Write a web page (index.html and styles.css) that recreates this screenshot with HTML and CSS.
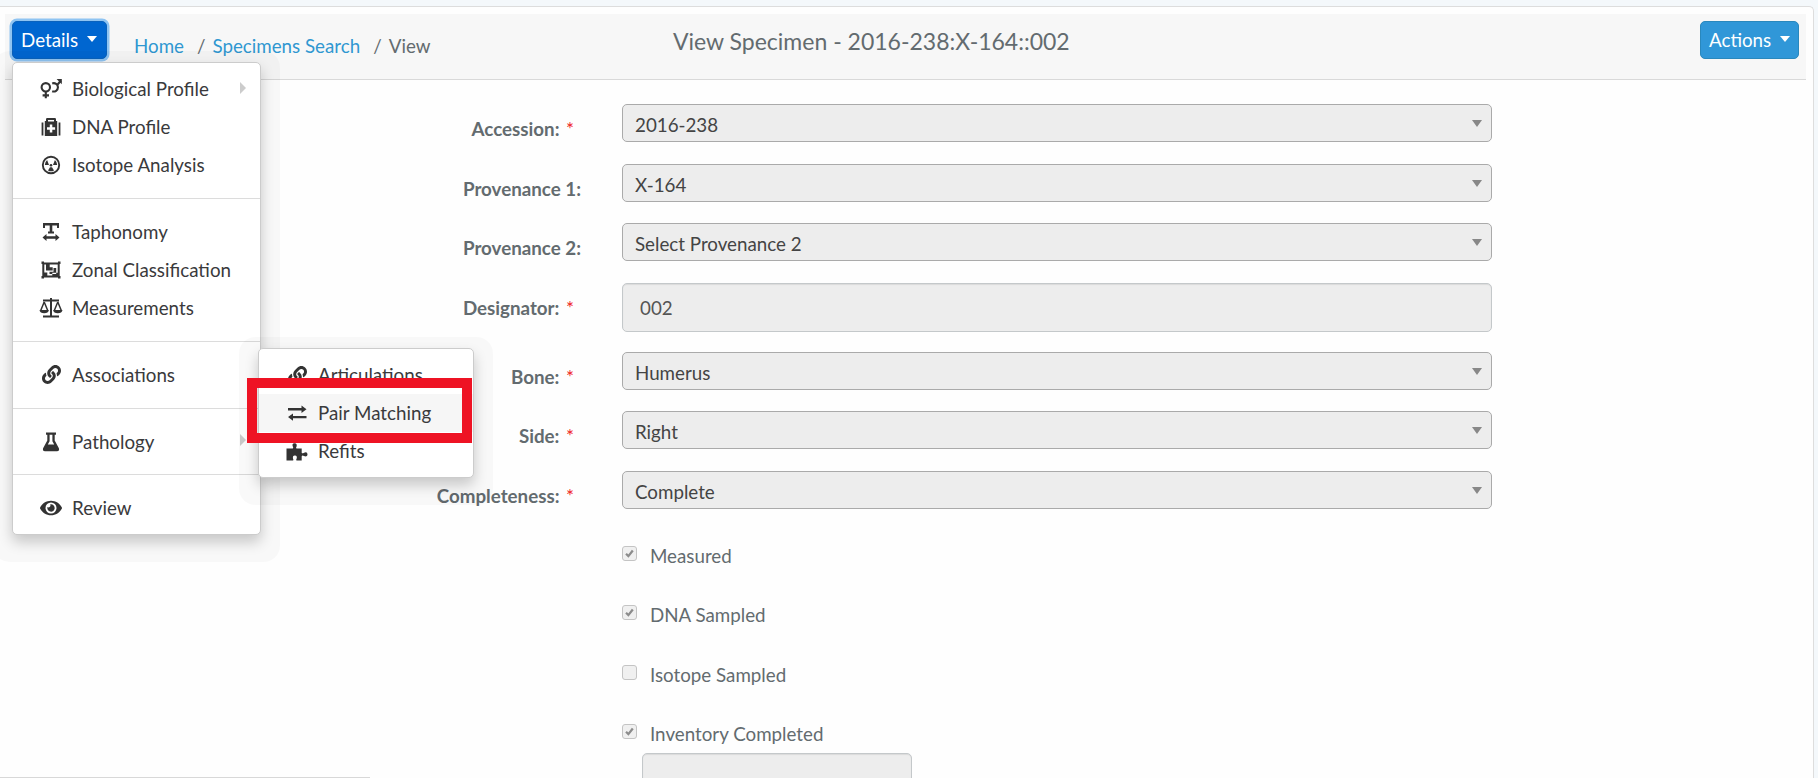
FILE: index.html
```html
<!DOCTYPE html>
<html lang="en">
<head>
<meta charset="utf-8">
<title>View Specimen</title>
<link rel="stylesheet" href="styles.css">
</head>
<body>
<main class="panel">
  <header class="header">
    <div class="dropdown">
      <button class="btn btn-details">Details<span class="caret"></span></button>
      <nav class="menu main-menu">
        <a class="item"><svg class="icon" viewBox="0 0 24 24"><g fill="none" stroke="currentColor" stroke-width="2.1"><circle cx="6.8" cy="10.3" r="4.2"/><path d="M6.8 14.5v6.8M3.6 18.4h6.4M13.2 6.4a4.2 4.2 0 1 1 0 7.8M18.8 7.2l3-3.4"/></g><path d="M17.6 2h5.2v5.2z"/></svg>Biological Profile<span class="more"></span></a>
        <a class="item"><svg class="icon" viewBox="0 0 24 24"><path fill-rule="evenodd" d="M7 6V4.2Q7 3 8.200 3h7.600Q17 3 17 4.200V6h1.200v15H5.800V6zM9 5v1.500h6V5zM10.800 9.500v2.700H8v2.600h2.800v2.700h2.500v-2.700h2.800v-2.600h-2.800V9.500z"/><path d="M2.600 7.500h1.800v13H2.600zM19.600 7.500h1.800v13h-1.800z"/></svg>DNA Profile</a>
        <a class="item"><svg class="icon" viewBox="0 0 24 24"><circle cx="12" cy="12" r="8.200" fill="none" stroke="currentColor" stroke-width="1.900"/><circle cx="12" cy="12.200" r="1.300"/><path d="M10 12H5.800q.2-3 2.300-4.900zM14 12h4.200q-.2-3-2.300-4.900zM11 14.200h2l2 3.300q-3 1.700-6 0z"/></svg>Isotope Analysis</a>
        <hr class="divider">
        <a class="item"><svg class="icon" viewBox="0 0 24 24"><path d="M4 3h16v5h-2V5.500h-4.700v6H15v2H9v-2h1.700v-6H6V8H4zM3.500 17.500l4-3.500v2.300h9V14l4 3.500-4 3.500v-2.300h-9V21z"/></svg>Taphonomy</a>
        <a class="item"><svg class="icon" viewBox="0 0 24 24"><path fill-rule="evenodd" d="M2.500 3.500H5v1h14v-1h2.500V6h-.8v12h.8v2.500H19v-1H5v1H2.500V18h.8V6h-.8zM5.300 6.500v8h3v3h5v-2.800h5.400v-8.200h-5v2.800h-3V6.500zM7 6.500h6.700v6H7zM14.500 10h2.700v6h-6.700v-2.200h4z"/></svg>Zonal Classification</a>
        <a class="item"><svg class="icon" viewBox="0 0 24 24"><g fill="none" stroke="currentColor"><path stroke-width="2" d="M4 4.500h16M12 2v18M4 20.500h16"/><path stroke-width="1.500" d="M5.200 6L1.700 14.500M5.200 6l3.500 8.500M18.800 6l-3.500 8.500M18.800 6l3.500 8.500"/></g><path d="M.5 14h9.400q-.6 3.200-4.700 3.200T.5 14zM14.100 14h9.400q-.6 3.200-4.700 3.200T14.100 14z"/></svg>Measurements</a>
        <hr class="divider">
        <a class="item"><svg class="icon link" viewBox="0 0 512 512"><path id="chain" d="M326.612 185.391c59.747 59.809 58.927 155.698.36 214.59-.11.12-.24.25-.36.37l-67.2 67.2c-59.27 59.27-155.699 59.262-214.96 0-59.27-59.26-59.27-155.7 0-214.96l37.106-37.106c9.84-9.84 26.786-3.3 27.294 10.606.648 17.722 3.826 35.527 9.69 52.721 1.986 5.822.567 12.262-3.783 16.612l-13.087 13.087c-28.026 28.026-28.905 73.66-1.155 101.96 28.024 28.579 74.086 28.749 102.325.51l67.2-67.19c28.191-28.191 28.073-73.757 0-101.83-3.701-3.694-7.429-6.564-10.341-8.569a16.037 16.037 0 0 1-6.947-12.606c-.396-10.567 3.348-21.456 11.698-29.806l21.054-21.055c5.521-5.521 14.182-6.199 20.584-1.731a152.482 152.482 0 0 1 20.522 17.197zM467.547 44.449c-59.261-59.262-155.690-59.270-214.960 0l-67.200 67.200c-.120.120-.250.250-.360.370-58.566 58.892-59.387 154.781.360 214.590a152.454 152.454 0 0 0 20.521 17.196c6.402 4.468 15.064 3.789 20.584-1.731l21.054-21.055c8.350-8.350 12.094-19.239 11.698-29.806a16.037 16.037 0 0 0-6.947-12.606c-2.912-2.005-6.640-4.875-10.341-8.569-28.073-28.073-28.191-73.639 0-101.830l67.200-67.190c28.239-28.239 74.300-28.069 102.325.510 27.750 28.300 26.872 73.934-1.155 101.960l-13.087 13.087c-4.350 4.350-5.769 10.790-3.783 16.612 5.864 17.194 9.042 34.999 9.690 52.721.509 13.906 17.454 20.446 27.294 10.606l37.106-37.106c59.271-59.259 59.271-155.699.001-214.959z"/></svg>Associations</a>
        <hr class="divider">
        <a class="item"><svg class="icon" viewBox="0 0 24 24"><path fill-rule="evenodd" d="M7 2.500h10v2.300h-1.300v5.700l4.200 7.700q.8 2.800-1.900 3H6q-2.700-.2-1.900-3l4.200-7.700V4.800H7zM10.600 4.800v6.400L8.800 14.500h6.400l-1.800-3.300V4.800z"/></svg>Pathology<span class="more"></span></a>
        <hr class="divider">
        <a class="item"><svg class="icon eye" viewBox="0 0 576 512"><path d="M572.520 241.400C518.290 135.590 410.930 64 288 64S57.680 135.640 3.480 241.410a32.350 32.350 0 0 0 0 29.190C57.710 376.410 165.070 448 288 448s230.320-71.640 284.520-177.410a32.350 32.350 0 0 0 0-29.190zM288 400a144 144 0 1 1 144-144 143.930 143.930 0 0 1-144 144zm0-240a95.310 95.310 0 0 0-25.310 3.790 47.850 47.850 0 0 1-66.900 66.900A95.780 95.780 0 1 0 288 160z"/></svg>Review</a>
      </nav>
      <nav class="menu sub-menu">
        <a class="item"><svg class="icon link" viewBox="0 0 512 512"><use href="#chain"/></svg>Articulations</a>
        <a class="item active"><svg class="icon" viewBox="0 0 24 24"><path d="M3 7h13.500V4.500l5 3.700-5 3.700V9.400H3zM21.500 17.300H8v2.500l-5-3.700 5-3.700v2.500h13.500z"/></svg>Pair Matching</a>
        <a class="item"><svg class="icon" viewBox="0 0 24 24"><path d="M1.500 9.500h6.200q1-.7.2-1.700Q6.500 4.500 9.500 4.300t2 3.500q-1 1 0 1.700h5.200v4.200q.7 1.200 1.900.2 3.700-1.700 3.900 1.400t-3.600 1.700q-1.500-1-2.200.3V21.500h-5.200q-.7-.8.100-1.800 1-3-1.600-3.200t-2 3.200q.8 1 .1 1.800H1.500z"/></svg>Refits</a>
      </nav>
      <div class="highlight"></div>
    </div>
    <ol class="crumbs"><li><a>Home</a></li><li><a>Specimens Search</a></li><li>View</li></ol>
    <h1 class="title">View Specimen - 2016-238:X-164::002</h1>
    <button class="btn btn-actions">Actions<span class="caret"></span></button>
  </header>
  <form class="form">
    <div class="row"><label class="label">Accession: <b class="req">*</b></label><div class="select">2016-238</div></div>
    <div class="row"><label class="label">Provenance 1:</label><div class="select">X-164</div></div>
    <div class="row"><label class="label">Provenance 2:</label><div class="select">Select Provenance 2</div></div>
    <div class="row tall"><label class="label">Designator: <b class="req">*</b></label><div class="input">002</div></div>
    <div class="row"><label class="label">Bone: <b class="req">*</b></label><div class="select">Humerus</div></div>
    <div class="row"><label class="label">Side: <b class="req">*</b></label><div class="select">Right</div></div>
    <div class="row"><label class="label">Completeness: <b class="req">*</b></label><div class="select">Complete</div></div>
    <div class="check"><span class="box"><svg viewBox="0 0 15 15"><path d="M3.500 7.800l2.700 2.700L11.300 4"/></svg></span>Measured</div>
    <div class="check"><span class="box"><svg viewBox="0 0 15 15"><path d="M3.500 7.800l2.700 2.700L11.300 4"/></svg></span>DNA Sampled</div>
    <div class="check"><span class="box"></span>Isotope Sampled</div>
    <div class="check last"><span class="box"><svg viewBox="0 0 15 15"><path d="M3.500 7.800l2.700 2.700L11.300 4"/></svg></span>Inventory Completed</div>
    <div class="input date">09/14/2018</div>
  </form>
</main>
<div class="status-edge"></div>
</body>
</html>
```
FILE: styles.css
```css
* { box-sizing: border-box; }
body {
  margin: 0;
  height: 778px;
  overflow: hidden;
  padding-top: 6px;
  background: #f4f8fb;
  font: 18.75px/28px Lato, sans-serif;
  color: #636b6f;
}
.panel {
  width: 1814px;
  height: 790px;
  padding: 7px 7px 0 5px;
  background: #fefefe;
  border: solid #ddd;
  border-width: 1px 1px 0 0;
  border-radius: 0 5px 0 0;
}
.header {
  display: flex;
  align-items: flex-start;
  height: 66px;
  padding: 7px 7px 0 6px;
  background: #f7f7f7;
  border-bottom: 1px solid #d9d9d9;
}
.dropdown { position: relative; width: 97px; }
.btn {
  display: flex;
  align-items: center;
  height: 38px;
  padding: 0 8px;
  border: 1px solid #2a88bd;
  border-radius: 5px;
  background: #3097d8;
  color: #fff;
  font: inherit;
  white-space: nowrap;
}
.btn-details {
  width: 95px;
  margin-left: 1px;
  padding-left: 8px;
  background: #0066d0;
  border-color: #0a62bd;
  box-shadow: 0 0 0 2.5px #8fc4f2;
}
.btn-actions { width: 99px; margin-left: auto; }
.caret {
  margin: -3px 0 0 9px;
  border: solid transparent;
  border-width: 6px 5.5px 0;
  border-top-color: #fff;
}
.crumbs {
  display: flex;
  width: 565px;
  margin: 0;
  padding: 11px 0 0 26px;
  list-style: none;
}
.crumbs li + li::before { content: "/"; padding: 0 7px 0 13px; }
.crumbs a { color: #3097d1; }
.title {
  margin: 0;
  padding-top: 5px;
  font-size: 23px;
  font-weight: 400;
  line-height: 30px;
}
.menu {
  position: absolute;
  padding: 7px 0;
  background: #fff;
  border: 1px solid #ccc;
  border-radius: 5px;
  box-shadow: 0 7px 14px rgba(0,0,0,.2), 0 8px 0 19px rgba(0,0,0,.022);
}
.main-menu { left: 1px; top: 41px; width: 249px; height: 473px; }
.sub-menu { left: 247px; top: 327px; width: 216px; height: 130px; }
.item {
  position: relative;
  display: flex;
  align-items: center;
  height: 38.2px;
  padding-left: 26px;
  color: #3a3a3c;
}
.active { background: #f6f6f6; }
.icon { width: 24px; height: 24px; margin-right: 9px; fill: #333; color: #333; }
.link { width: 19px; height: 19px; margin: 0 12px 0 2px; }
.link { margin-left: 3px; margin-right: 11px; }
.eye { width: 22px; height: 20px; margin: 0 10px 0 1px; }
.more {
  position: absolute;
  right: 14px;
  top: 12px;
  border: solid transparent;
  border-width: 6.5px 0 6.5px 6px;
  border-left-color: #ccc;
}
.divider { height: 1px; margin: 13.7px 0; border: 0; background: #dcdcdc; }
.highlight {
  position: absolute;
  left: 236px;
  top: 357px;
  width: 225px;
  height: 65px;
  border: 10px solid #ee1324;
}
.form { width: 1487px; padding-top: 24px; }
.row { display: flex; height: 59.6px; }
.tall { height: 69px; }
.label {
  width: 617px;
  padding: 11px 41px 0 0;
  text-align: right;
  font-weight: 700;
}
.req { color: #ee1c24; padding: 0 7px 0 2px; font-weight: 400; }
.select {
  position: relative;
  width: 870px;
  height: 38px;
  padding: 6px 12px;
  border: 1px solid #aaa;
  border-radius: 5px;
  background: #ededed;
  color: #444;
}
.select::after {
  content: "";
  position: absolute;
  right: 9px;
  top: 15px;
  border: solid transparent;
  border-width: 7px 5px 0;
  border-top-color: #888;
}
.input {
  width: 870px;
  height: 49px;
  padding: 10px 17px;
  border: 1px solid #c4c8ca;
  border-radius: 5px;
  background: #ededed;
  box-shadow: inset 0 1px 1px rgba(0,0,0,.08);
  color: #555;
}
.check { display: flex; height: 59.6px; margin-left: 617px; padding-top: 11px; }
.last { height: 44px; }
.form .check:nth-of-type(8) { margin-top: 0; }
.box {
  width: 15px;
  height: 15px;
  margin: 4px 13px 0 0;
  border: 1px solid #c4c4c4;
  border-radius: 3px;
  background: #f0f0f0;
  line-height: 0;
}
.box svg { width: 13px; height: 13px; fill: none; stroke: #8c8c8c; stroke-width: 2.6; }
.date { width: 270px; height: 60px; margin-left: 637px; padding: 18px 19px; }
.status-edge { position: absolute; left: 0; bottom: 0; width: 370px; height: 1px; background: #d8d8d8; }
```
